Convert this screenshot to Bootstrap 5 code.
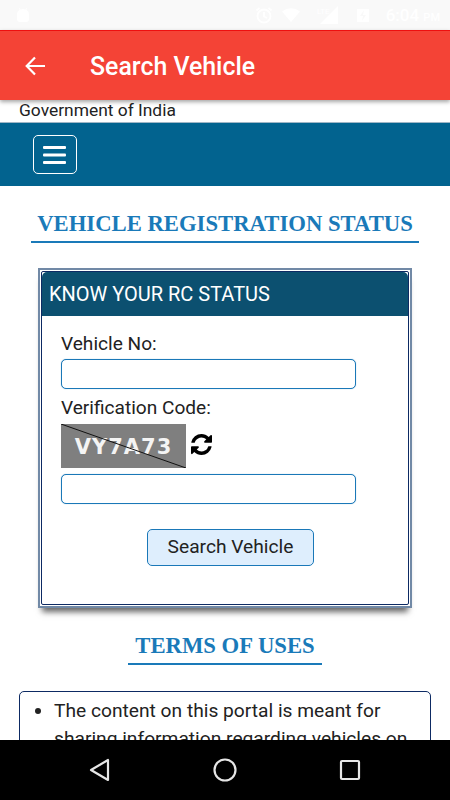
<!DOCTYPE html>
<html lang="en">
<head>
  <meta charset="UTF-8" />
  <meta name="viewport" content="width=device-width, initial-scale=1.0"/>
  <title>Search Vehicle</title>
  <link href="https://cdn.jsdelivr.net/npm/bootstrap@5.3.3/dist/css/bootstrap.min.css" rel="stylesheet">
  <style>
    html, body {
      height: 100%;
      margin: 0;
      overflow: hidden;
    }
    body {
      font-family: Roboto, "Liberation Sans", sans-serif;
      color: #222;
      background: #fff;
    }
    .phone {
      width: 450px;
      height: 800px;
    }
    .status-bar {
      height: 30px;
      background: #f9f9f9;
      padding: 0 10px 0 15px;
      color: #fff;
    }
    .status-time {
      font-size: 17px;
      font-weight: 500;
      line-height: 1;
    }
    .status-time span {
      font-size: 11px;
    }
    .status-lte {
      font-size: 8px;
      line-height: 1;
      align-self: flex-start;
      margin: 2px -12px 0 0;
    }
    .app-bar {
      height: 70px;
      background: #f44336;
      border-top: 1px solid #ee0f0f;
      box-shadow: 0 2px 4px rgba(0,0,0,.35);
      color: #fff;
      padding-left: 25px;
      gap: 45px;
      position: relative;
      z-index: 2;
    }
    .app-title {
      font-size: 24.9px;
      font-weight: 500;
      margin: 4px 0 0;
      line-height: 1;
    }
    .page-area {
      min-height: 0;
      overflow: hidden;
    }
    .gov-line {
      font-size: 17.4px;
      line-height: 20px;
      padding: 0 0 2px 19px;
      color: #222;
    }
    .blue-bar {
      height: 64px;
      background: #02638f;
      border-top: 1px solid #9fb6c6;
      padding: 0 0 0 33px;
      justify-content: flex-start;
    }
    .menu-btn {
      width: 44px;
      height: 39px;
      padding: 0;
      border: 1.5px solid #fff;
      border-radius: 5px;
      background: transparent;
    }
    .menu-btn svg {
      display: block;
      margin: auto;
    }
    .section-title {
      display: inline-block;
      font-family: "Liberation Serif", "DejaVu Serif", serif;
      font-weight: 700;
      font-size: 22.7px;
      line-height: 32px;
      color: #1a7ab9;
      border-bottom: 2px solid #1a7ab9;
      margin: 0;
    }
    .title-vehicle {
      margin-top: 22px;
      padding: 0 6px 1px;
    }
    .title-terms {
      margin-top: 22px;
      padding: 0 7px 1px;
    }
    .rc-frame {
      margin: 25px 38px 0;
      border: 2px solid #7189a6;
      padding: 1px;
      box-shadow: 0 8px 6px -4px rgba(0,0,0,.6);
    }
    .rc-panel {
      border: 1px solid #0d2a63;
      border-radius: 2px;
      height: 334px;
    }
    .rc-head {
      height: 44px;
      background: #0c5070;
      color: #fff;
      font-size: 20px;
      line-height: 44px;
      padding: 0 0 0 7px;
      border: 0;
      border-radius: 0;
    }
    .rc-body {
      padding: 16px 19px 0;
    }
    .rc-label {
      font-size: 19.1px;
      line-height: 24px;
      margin: 0 0 3px;
      display: block;
    }
    .rc-input {
      width: 295px;
      height: 30px;
      padding: 0 6px;
      border: 1px solid #1a78b8;
      border-radius: 5px;
      box-shadow: 0 0 1px rgba(26,120,184,.5);
      margin-bottom: 7px;
    }
    .captcha-box {
      width: 125px;
      height: 44px;
      background: #7f7f7f;
      color: #f4f4f4;
      font-family: "DejaVu Sans", sans-serif;
      font-weight: 700;
      font-size: 21px;
      letter-spacing: 1px;
      line-height: 47px;
      text-align: center;
      position: relative;
      overflow: hidden;
    }
    .captcha-box svg {
      position: absolute;
      top: 0;
      left: 0;
    }
    .captcha-row {
      gap: 5px;
      margin: 4px 0 6px;
    }
    .refresh-icon {
      margin-bottom: 4px;
    }
    .search-btn {
      width: 167px;
      height: 37px;
      padding: 0;
      font-size: 19.2px;
      color: #222;
      background: #deeefd;
      border: 1px solid #1a78b8;
      border-radius: 5px;
      margin: 25px 0 0 86px;
      display: block;
    }
    .terms-box {
      margin: 26px 19px 0;
      border: 1px solid #0d2a63;
      border-radius: 5px;
      padding: 5px 14px 0 0;
      font-size: 19.2px;
      line-height: 28px;
      height: 120px;
    }
    .terms-box ul {
      padding-left: 34px;
      margin: 0;
    }
    .nav-keys {
      height: 60px;
      background: #000;
      padding: 0 89px;
      flex-shrink: 0;
    }
  </style>
</head>
<body>

<div class="phone d-flex flex-column">
  <!-- android status bar, white on near white like the screenshot -->
  <div class="status-bar d-flex align-items-center flex-shrink-0">
    <svg width="16" height="16" viewBox="0 0 16 16" fill="#fff"><path d="M2 7q0-3 2.700-4.300L4 1.300l.6-.3.800 1.400q2.600-.7 5.200 0l.8-1.400.6.300-.7 1.400Q14 4 14 7v5q0 3-3 3H5q-3 0-3-3z"/></svg>
    <div class="d-flex align-items-center ms-auto">
      <svg width="18" height="18" viewBox="0 0 18 18" fill="none" stroke="#fff" stroke-width="1.800"><circle cx="9" cy="10" r="6.500"/><path d="M9 6v4.500l3 1.500M1.500 4.500 4.500 2M16.500 4.500 13.500 2"/></svg>
      <svg class="ms-2" width="20" height="14" viewBox="0 0 18 14" fill="#fff"><path d="M0 3.500Q9-3 18 3.500L9 14z"/></svg>
      <div class="status-lte ms-3">LTE</div>
      <svg width="22" height="18" viewBox="0 0 22 18" fill="#fff"><path d="M20 0v18H2z"/></svg>
      <svg class="ms-3" width="14" height="15" viewBox="0 0 14 15" fill="#fff"><path d="M1 1h12v13H1zM8 2 4 8h3l-1 5 4-6H7z" fill-rule="evenodd"/></svg>
      <div class="status-time ms-3">6:04 <span>PM</span></div>
    </div>
  </div>

  <div class="app-bar d-flex align-items-center flex-shrink-0">
    <svg width="20" height="20" viewBox="0 0 20 20" fill="none" stroke="#fff" stroke-width="2.200"><path d="M20 10H2M10 1.500 1.700 10l8.300 8.500"/></svg>
    <h1 class="app-title">Search Vehicle</h1>
  </div>

  <div class="page-area flex-grow-1">
    <div class="gov-line">Government of India</div>

    <nav class="navbar blue-bar">
      <button class="navbar-toggler menu-btn" type="button" aria-label="Menu">
        <svg width="24" height="20" viewBox="0 0 24 20" fill="#fff"><rect y="1" width="23" height="3" rx="1"/><rect y="8.500" width="23" height="3" rx="1"/><rect y="16" width="23" height="3" rx="1"/></svg>
      </button>
    </nav>

    <div class="text-center">
      <h2 class="section-title title-vehicle">VEHICLE REGISTRATION STATUS</h2>
    </div>

    <div class="rc-frame">
      <div class="card rc-panel">
        <div class="card-header rc-head">KNOW YOUR RC STATUS</div>
        <div class="card-body rc-body">
          <label class="rc-label" for="vehicleNo">Vehicle No:</label>
          <input class="form-control rc-input" id="vehicleNo" type="text">
          <label class="rc-label" for="captcha">Verification Code:</label>
          <div class="d-flex align-items-center captcha-row">
            <div class="captcha-box">VY7A73
              <svg width="125" height="44" viewBox="0 0 125 44"><line x1="0" y1="0" x2="125" y2="44" stroke="#111" stroke-width="1"/></svg>
            </div>
            <svg class="refresh-icon" width="21" height="21" viewBox="128 128 1536 1536" fill="#000"><path d="M1639 1056q0 5-1 7-64 268-268 434.500t-478 166.500q-146 0-282.500-55t-243.500-157l-129 129q-19 19-45 19t-45-19-19-45v-448q0-26 19-45t45-19h448q26 0 45 19t19 45-19 45l-137 137q71 66 161 102t187 36q134 0 250-65t186-179q11-17 53-117 8-23 30-23h192q13 0 22.500 9.500t9.500 22.500zm25-800v448q0 26-19 45t-45 19h-448q-26 0-45-19t-19-45 19-45l138-138q-148-137-349-137-134 0-250 65t-186 179q-11 17-53 117-8 23-30 23h-199q-13 0-22.500-9.500t-9.500-22.500v-7q65-268 270-434.500t480-166.500q146 0 284 55.500t245 156.500l130-129q19-19 45-19t45 19 19 45z"/></svg>
          </div>
          <input class="form-control rc-input" id="captcha" type="text">
          <button class="btn search-btn" type="button">Search Vehicle</button>
        </div>
      </div>
    </div>

    <div class="text-center">
      <h2 class="section-title title-terms">TERMS OF USES</h2>
    </div>

    <div class="terms-box">
      <ul>
        <li>The content on this portal is meant for sharing information regarding vehicles on</li>
      </ul>
    </div>
  </div>

  <div class="nav-keys d-flex align-items-center justify-content-between">
    <svg width="22" height="24" viewBox="0 0 22 24" fill="none" stroke="#e6e6e6" stroke-width="2.200" stroke-linejoin="round"><path d="M19 2v20L2 12z"/></svg>
    <svg width="24" height="24" viewBox="0 0 24 24" fill="none" stroke="#e6e6e6" stroke-width="2.200"><circle cx="12" cy="12" r="10.500"/></svg>
    <svg width="22" height="22" viewBox="0 0 22 22" fill="none" stroke="#e6e6e6" stroke-width="2.200" stroke-linejoin="round"><rect x="2" y="2" width="18" height="18" rx="1"/></svg>
  </div>
</div>

<script src="https://cdn.jsdelivr.net/npm/bootstrap@5.3.3/dist/js/bootstrap.bundle.min.js"></script>
</body>
</html>
